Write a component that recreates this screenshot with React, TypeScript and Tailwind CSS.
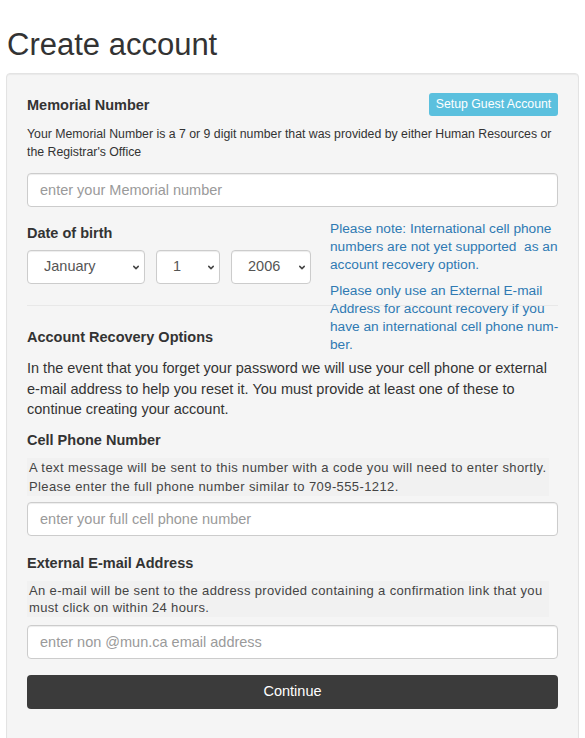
import { ChevronDown } from "lucide-react"

const font = { fontFamily: '"Liberation Sans", Arial, sans-serif' }

function Select({ value, width }: { value: string; width: string }) {
  return (
    <div className={`relative ${width}`}>
      <select
        defaultValue={value}
        className="h-[34px] w-full appearance-none rounded-[4px] border border-[#ccc] bg-white pl-[16px] text-[14.5px] text-[#555] shadow-[inset_0_1px_1px_rgba(0,0,0,0.075)]"
      >
        <option>{value}</option>
      </select>
      <ChevronDown
        className="pointer-events-none absolute right-[4px] top-[13px] h-[9px] w-[10px] text-[#444]"
        strokeWidth={4}
      />
    </div>
  )
}

function TextInput({ placeholder }: { placeholder: string }) {
  return (
    <input
      placeholder={placeholder}
      className="block h-[34px] w-full rounded-[4px] border border-[#ccc] bg-white px-[12px] text-[14.5px] text-[#555] shadow-[inset_0_1px_1px_rgba(0,0,0,0.075)] placeholder:text-[#9a9a9a]"
    />
  )
}

export default function App() {
  return (
    <div className="min-h-screen bg-white text-[#333]" style={font}>
      <h1 className="ml-[7px] pt-[28px] text-[31px] font-normal leading-[34px] text-[#333]">
        Create account
      </h1>

      <div className="mx-[6px] mt-[11px] min-h-[700px] rounded-[4px] border border-[#e3e3e3] bg-[#f5f5f5] px-[20px] pt-[19px] shadow-[inset_0_1px_1px_rgba(0,0,0,0.05)]">
        {/* Memorial number */}
        <div className="flex h-[23px] items-center justify-between">
          <label className="text-[14.5px] font-bold leading-[20px]">Memorial Number</label>
          <button className="h-[23px] w-[129px] rounded-[3px] bg-[#5bc0de] text-[12.3px] text-white">
            Setup Guest Account
          </button>
        </div>
        <p className="mt-[9px] text-[12.3px] leading-[18px]">
          Your Memorial Number is a 7 or 9 digit number that was provided by either Human Resources or the
          Registrar's Office
        </p>
        <div className="mt-[12px]">
          <TextInput placeholder="enter your Memorial number" />
        </div>

        {/* Date of birth */}
        <div className="relative mt-[16px]">
          <label className="block text-[14.5px] font-bold leading-[20px]">Date of birth</label>
          <div className="mt-[7px] flex gap-[11px]">
            <Select value="January" width="w-[118px]" />
            <Select value="1" width="w-[64px]" />
            <Select value="2006" width="w-[80px]" />
          </div>
          <div className="absolute left-[303px] top-[-3px] z-10 w-[240px] text-[13.7px] leading-[18px] text-[#2f7ab3]">
            <p>
              Please note: International cell phone
              <br />
              numbers are not yet supported&nbsp; as an
              <br />
              account recovery option.
            </p>
            <p className="mt-[8px]">
              Please only use an External E-mail
              <br />
              Address for account recovery if you
              <br />
              have an international cell phone num-
              <br />
              ber.
            </p>
          </div>
        </div>

        <hr className="mt-[21px] border-t border-[#e8e8e8]" />

        {/* Account recovery */}
        <h2 className="mt-[21px] text-[14.5px] font-bold leading-[20px]">Account Recovery Options</h2>
        <p className="mt-[11px] text-[14.5px] leading-[20.5px]">
          In the event that you forget your password we will use your cell phone or external e-mail address to
          help you reset it. You must provide at least one of these to continue creating your account.
        </p>

        <label className="mt-[10px] block text-[14.5px] font-bold leading-[20px]">Cell Phone Number</label>
        <div className="mt-[8px] w-[522px] bg-[#f1f1f1] px-[2px] text-[13px] leading-[19px] tracking-[0.4px] text-[#444]">
          A text message will be sent to this number with a code you will need to enter shortly. Please enter the
          full phone number similar to 709-555-1212.
        </div>
        <div className="mt-[6px]">
          <TextInput placeholder="enter your full cell phone number" />
        </div>

        <label className="mt-[17px] block text-[14.5px] font-bold leading-[20px]">External E-mail Address</label>
        <div className="mt-[8px] w-[522px] bg-[#f1f1f1] px-[2px] py-[1px] text-[13px] leading-[17px] tracking-[0.35px] text-[#444]">
          An e-mail will be sent to the address provided containing a confirmation link that you must click on
          within 24 hours.
        </div>
        <div className="mt-[8px]">
          <TextInput placeholder="enter non @mun.ca email address" />
        </div>

        <button className="mt-[16px] h-[34px] w-full rounded-[4px] bg-[#3b3b3b] text-[14.5px] text-white">
          Continue
        </button>
      </div>
    </div>
  )
}
